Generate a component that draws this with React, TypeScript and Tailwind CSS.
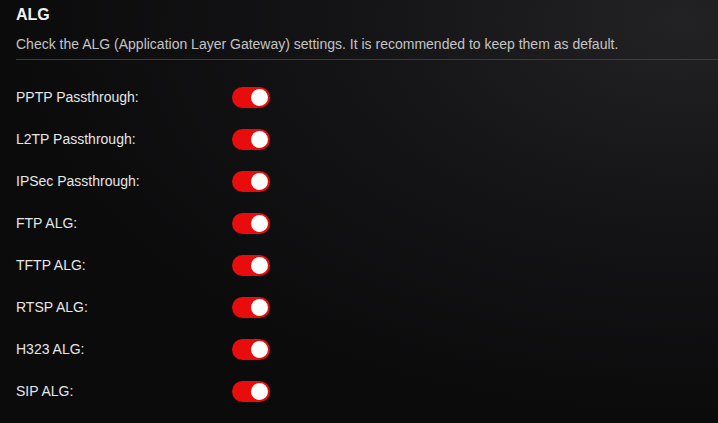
import React from "react";

const rows = [
  "PPTP Passthrough:",
  "L2TP Passthrough:",
  "IPSec Passthrough:",
  "FTP ALG:",
  "TFTP ALG:",
  "RTSP ALG:",
  "H323 ALG:",
  "SIP ALG:",
];

function Toggle() {
  return (
    <div className="w-[38px] h-[21px] rounded-full bg-[#e80c0c] flex items-center justify-end pr-[2px]">
      <div className="w-[17px] h-[17px] rounded-full bg-white" />
    </div>
  );
}

export default function App() {
  return (
    <div
      className="w-[718px] h-[423px] overflow-hidden pl-4 bg-[#0b0b0c] bg-[radial-gradient(ellipse_at_95%_5%,#222224_0%,#141416_35%,#0b0b0c_70%)]"
      style={{ fontFamily: '"Liberation Sans", Arial, sans-serif' }}
    >
      <div className="text-[16px] font-bold leading-[20px] text-[#f2f2f2] pt-[5px]">ALG</div>
      <div className="text-[14px] leading-[20px] text-[#c4c4c4] mt-[9px] pb-[5px] border-b border-[#3c3c3c]">
        Check the ALG (Application Layer Gateway) settings. It is recommended to keep them as default.
      </div>
      <div className="mt-[16px] flex flex-col">
        {rows.map((r) => (
          <div key={r} className="h-[42px] flex items-center">
            <div className="w-[216px] text-[14px] text-[#e6e6e6]">{r}</div>
            <Toggle />
          </div>
        ))}
      </div>
    </div>
  );
}
